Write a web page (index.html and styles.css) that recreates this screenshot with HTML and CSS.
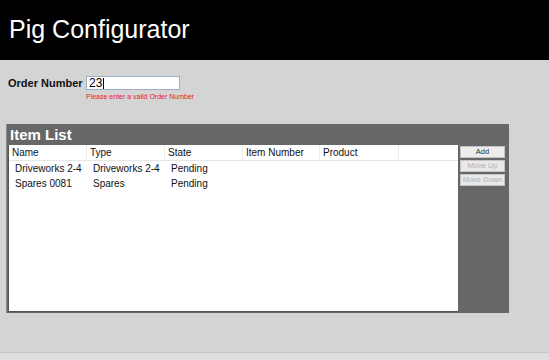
FILE: index.html
```html
<!DOCTYPE html>
<html>
<head>
<meta charset="utf-8">
<link rel="stylesheet" href="styles.css">
</head>
<body>
<div class="page">
  <header class="topbar"><h1 class="title">Pig Configurator</h1></header>
  <section class="order">
    <div class="order-row">
      <label class="order-label">Order Number</label>
      <div class="order-input">23<span class="caret"></span></div>
    </div>
    <div class="order-error">Please enter a valid Order Number</div>
  </section>
  <section class="panel">
    <div class="panel-title">Item List</div>
    <div class="panel-body">
      <div class="listview">
        <div class="lv-head">
          <div class="lv-h">Name</div>
          <div class="lv-h">Type</div>
          <div class="lv-h">State</div>
          <div class="lv-h">Item Number</div>
          <div class="lv-h">Product</div>
          <div class="lv-h lv-h-last"></div>
        </div>
        <div class="lv-row">
          <div class="lv-c">Driveworks 2-4</div>
          <div class="lv-c">Driveworks 2-4</div>
          <div class="lv-c">Pending</div>
          <div class="lv-c"></div>
          <div class="lv-c"></div>
          <div class="lv-c"></div>
        </div>
        <div class="lv-row">
          <div class="lv-c">Spares 0081</div>
          <div class="lv-c">Spares</div>
          <div class="lv-c">Pending</div>
          <div class="lv-c"></div>
          <div class="lv-c"></div>
          <div class="lv-c"></div>
        </div>
      </div>
      <div class="buttons">
        <div class="btn">Add</div>
        <div class="btn btn-disabled">Move Up</div>
        <div class="btn btn-disabled">Move Down</div>
      </div>
    </div>
  </section>
  <div class="footer"></div>
</div>
</body>
</html>
```
FILE: styles.css
```css
html, body {
  margin: 0;
  padding: 0;
}
body {
  background: #d4d4d4;
  font-family: "Liberation Sans", Arial, sans-serif;
}
.page {
  display: flex;
  flex-direction: column;
  height: 360px;
  overflow: hidden;
}
.topbar {
  background: #000;
  height: 60px;
  box-sizing: border-box;
  padding: 17px 0 0 9px;
}
.title {
  margin: 0;
  color: #fff;
  font-size: 25px;
  line-height: 25px;
  font-weight: normal;
}
.order {
  padding: 16px 0 0 8px;
  height: 64px;
  box-sizing: border-box;
}
.order-row {
  display: flex;
  align-items: center;
  height: 14px;
}
.order-label {
  width: 78px;
  font-size: 11px;
  font-weight: bold;
  color: #111;
}
.order-input {
  width: 94px;
  height: 14px;
  box-sizing: border-box;
  background: #fff;
  border: 1px solid #9fb0c4;
  font-size: 12px;
  line-height: 12px;
  padding-left: 2px;
  color: #000;
  display: flex;
  align-items: center;
}
.caret {
  display: inline-block;
  width: 1px;
  height: 11px;
  background: #000;
  margin-left: 1px;
}
.order-error {
  margin: 3px 0 0 78px;
  font-size: 7px;
  line-height: 8px;
  color: #e8202a;
}
.panel {
  margin-left: 6px;
  width: 503px;
  height: 189px;
  background: #676767;
  border-left: 1px solid #888;
  box-sizing: border-box;
  display: flex;
  flex-direction: column;
}
.panel-title {
  height: 21px;
  color: #fff;
  font-size: 15px;
  font-weight: bold;
  line-height: 21px;
  padding-left: 3px;
}
.panel-body {
  flex: 1;
  display: flex;
  padding: 0 0 1px 1px;
}
.listview {
  width: 449px;
  background: #fff;
  border-left: 1px solid #555;
  border-bottom: 1px solid #555;
  font-size: 10px;
  color: #111;
}
.lv-head, .lv-row {
  display: grid;
  grid-template-columns: 78px 78px 78px 77px 79px 1fr;
}
.lv-head {
  height: 15px;
  border-bottom: 1px solid #e6e6e6;
}
.lv-h {
  padding-left: 3px;
  line-height: 15px;
  border-right: 1px solid #ececec;
}
.lv-h-last {
  border-right: none;
}
.lv-row {
  height: 15px;
}
.lv-c {
  padding-left: 6px;
  line-height: 15px;
  white-space: nowrap;
}
.buttons {
  display: flex;
  flex-direction: column;
  gap: 2px;
  padding: 1px 0 0 2px;
}
.btn {
  width: 45px;
  height: 12px;
  box-sizing: border-box;
  background: #ededed;
  border: 1px solid #c4c4c4;
  font-size: 7.5px;
  line-height: 10px;
  text-align: center;
  color: #333;
}
.btn-disabled {
  color: #b0b0b0;
  background: #e9e9e9;
}
.footer {
  margin-top: auto;
  height: 7px;
  border-top: 1px solid #c6c6c6;
  background: #dedede;
}
```
